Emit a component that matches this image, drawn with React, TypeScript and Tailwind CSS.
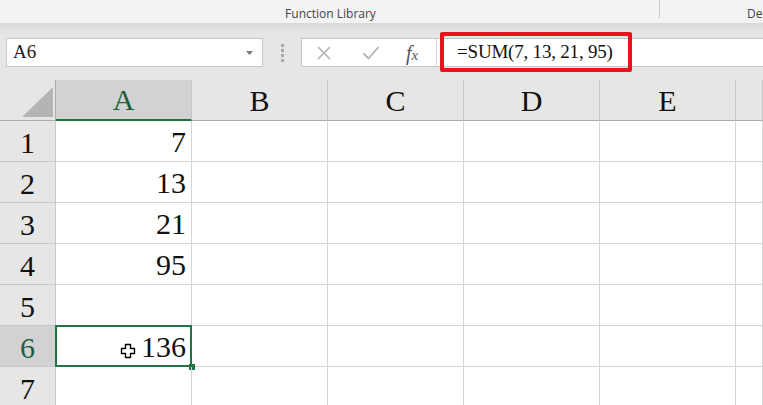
import { Fragment } from "react";

const cols = ["A", "B", "C", "D", "E", ""];
const rows: { n: number; a: string }[] = [
  { n: 1, a: "7" },
  { n: 2, a: "13" },
  { n: 3, a: "21" },
  { n: 4, a: "95" },
  { n: 5, a: "" },
  { n: 6, a: "136" },
  { n: 7, a: "" },
];

const serif = "font-['Liberation_Serif','Times_New_Roman',serif]";

export default function App() {
  return (
    <div className="w-[763px] h-[405px] overflow-hidden bg-white">
      {/* Ribbon strip */}
      <div className="h-[23px] bg-[#f3f3f3] flex items-start font-['Open_Sans','Noto_Sans',sans-serif] text-[12px] text-[#444]">
        <div className="w-[660px] h-[18px] border-r border-[#c8c8c8] flex items-end justify-center pl-[2px] pb-0 leading-none">
          <span className="translate-y-[2px]">Function Library</span>
        </div>
        <div className="flex-1 h-[23px] flex items-end pl-[87px] pb-[3px] leading-none whitespace-nowrap overflow-hidden">
          De
        </div>
      </div>

      {/* Formula bar */}
      <div className="h-[57px] bg-gradient-to-b from-[#d9d9d9] via-[#e6e6e6] via-20% to-[#e6e6e6] flex items-start pt-[15px] pl-[6px]">
        <div className="w-[257px] h-[29px] bg-white border border-[#c6c6c6] flex items-center justify-between pl-[6px] pr-[9px]">
          <span className={`${serif} text-[19px] text-[#222]`}>A6</span>
          <svg width="7" height="4" viewBox="0 0 7 4">
            <path d="M0 0h7L3.5 4z" fill="#777" />
          </svg>
        </div>
        <div className="w-[38px] h-[29px] flex flex-col items-center justify-center gap-[2px]">
          <span className="w-[3px] h-[3px] bg-[#a8a8a8]" />
          <span className="w-[3px] h-[3px] bg-[#a8a8a8]" />
          <span className="w-[3px] h-[3px] bg-[#a8a8a8]" />
          <span className="w-[3px] h-[3px] bg-[#a8a8a8]" />
        </div>
        <div className="flex-1 h-[29px] bg-white border border-[#c6c6c6] border-r-0 flex items-center">
          <div className="w-[135px] h-full flex items-center border-r border-[#d6d6d6]">
            <svg width="16" height="16" viewBox="0 0 16 16" className="ml-[14px]">
              <path d="M2 2l12 12M14 2L2 14" stroke="#b3b3b3" strokeWidth="1.6" />
            </svg>
            <svg width="18" height="16" viewBox="0 0 18 16" className="ml-[30px]">
              <path d="M1.5 8.5l5 5L16.5 2" stroke="#b3b3b3" strokeWidth="1.8" fill="none" />
            </svg>
            <span className={`${serif} italic text-[20px] text-[#555] ml-[26px] leading-none`}>
              f<span className="text-[15px]">x</span>
            </span>
          </div>
          <div className="relative ml-[3px] h-full flex items-center pl-[17px]">
            <span className={`${serif} text-[19px] text-[#111] tracking-[-0.2px]`}>=SUM(7, 13, 21, 95)</span>
            <div className="absolute left-0 top-[-7px] w-[192px] h-[40px] border-[4px] border-[#e8141b] rounded-[2px]" />
          </div>
        </div>
      </div>

      {/* Grid */}
      <div className={`grid grid-cols-[56px_136px_136px_136px_136px_136px_1fr] ${serif} text-[30px]`}>
        {/* header row */}
        <div className="relative h-[41px] bg-[#e6e6e6] border-r border-b border-[#ababab]">
          <svg width="56" height="41" viewBox="0 0 56 41" className="absolute inset-0">
            <path d="M22 37L53 7V37z" fill="#b4b4b4" />
          </svg>
        </div>
        {cols.map((c, i) => (
          <div
            key={i}
            className={`h-[41px] flex items-center justify-center border-r border-[#c8c8c8] ${
              c === "A"
                ? "bg-[#d2d2d2] text-[#1e5e3c] border-b-2 border-b-[#217346]"
                : "bg-[#e6e6e6] text-[#111] border-b border-b-[#ababab]"
            }`}
          >
            <span className="leading-none pt-[1px]">{c}</span>
          </div>
        ))}

        {rows.map((r) => (
          <Fragment key={r.n}>
            <div
              className={`h-[41px] flex items-end justify-center pb-[3px] border-r border-b border-[#c8c8c8] leading-none ${
                r.n === 6 ? "bg-[#d2d2d2] text-[#1e5e3c]" : "bg-[#e6e6e6] text-[#111]"
              }`}
            >
              {r.n}
            </div>
            <div className="relative h-[41px] flex items-end justify-end pr-[5px] pb-[4px] border-r border-b border-[#d4d4d4] leading-none text-[#111]">
              {r.a}
              {r.n === 6 && (
                <>
                  <div className="absolute left-[-1px] top-[-1px] right-[-1px] bottom-[-1px] border-2 border-[#217346]" />
                  <div className="absolute right-[-4px] bottom-[-4px] w-[6px] h-[6px] bg-[#217346]" />
                  <svg width="16" height="16" viewBox="0 0 16 16" className="absolute left-[64px] top-[17px]">
                    <path
                      d="M5.5 1.5h5v4h4v5h-4v4h-5v-4h-4v-5h4z"
                      fill="#fff"
                      stroke="#000"
                      strokeWidth="1.4"
                      strokeLinejoin="round"
                    />
                  </svg>
                </>
              )}
            </div>
            {[0, 1, 2, 3, 4].map((k) => (
              <div key={k} className="h-[41px] border-r border-b border-[#d4d4d4]" />
            ))}
          </Fragment>
        ))}
      </div>
    </div>
  );
}
